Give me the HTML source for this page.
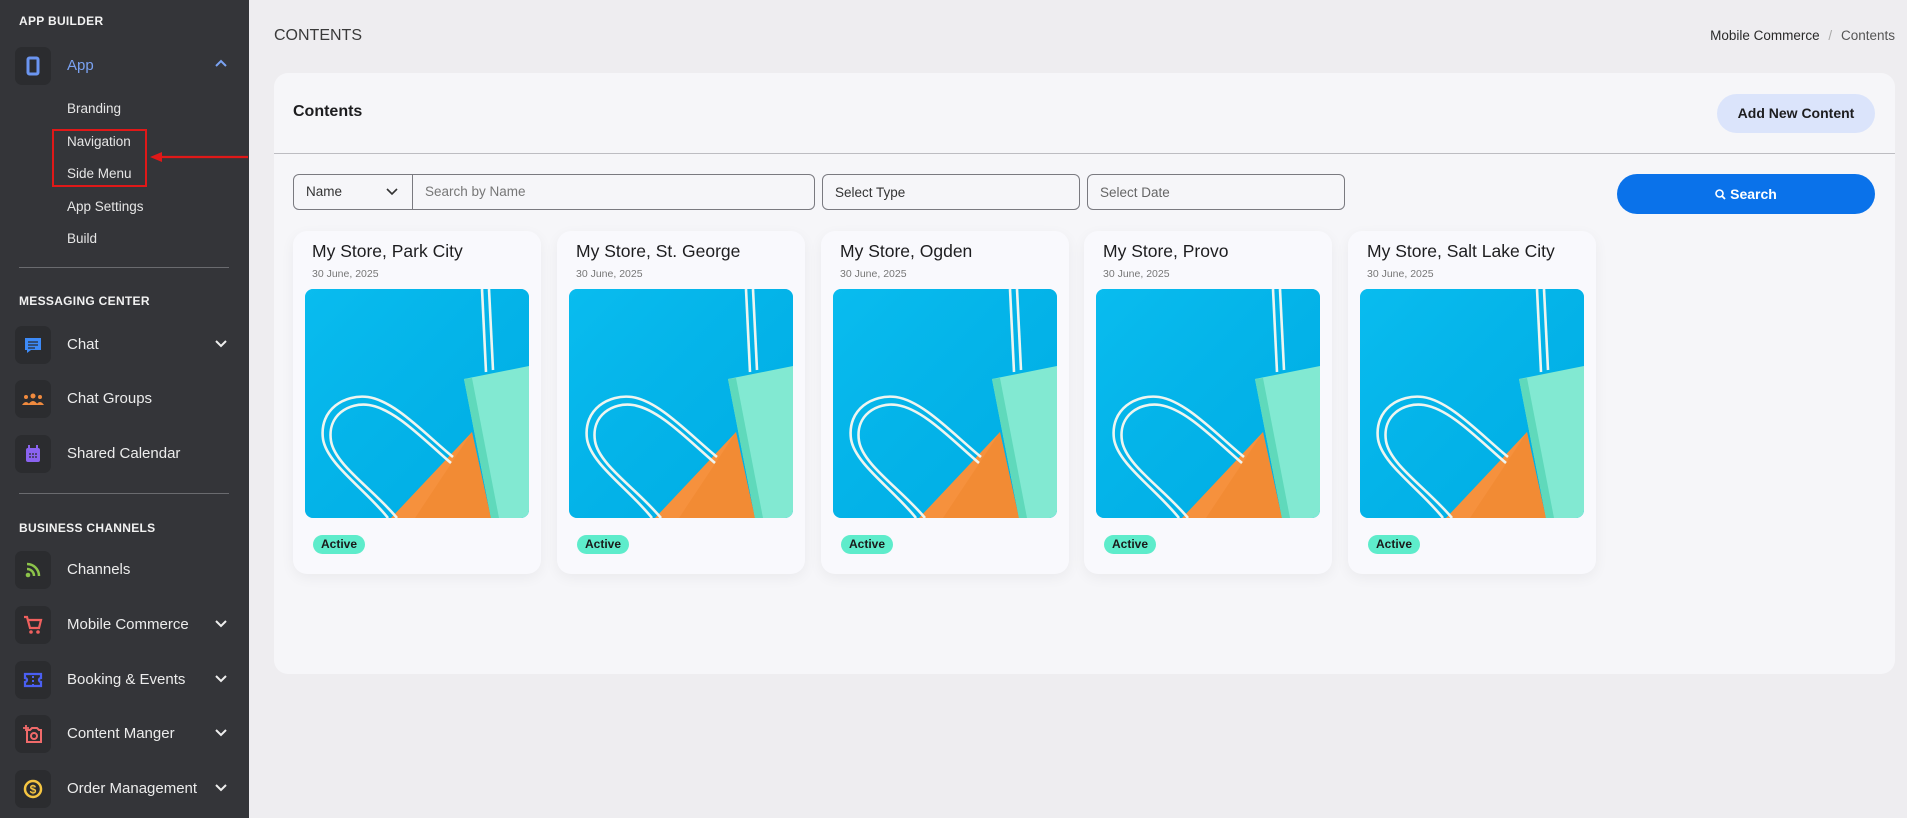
<!DOCTYPE html>
<html><head><meta charset="utf-8"><style>
*{box-sizing:border-box;margin:0;padding:0}
body{width:1907px;height:818px;overflow:hidden;background:#eeedf0;font-family:"Liberation Sans",sans-serif;position:relative}
.sb{position:absolute;left:0;top:0;width:249px;height:818px;background:#343539}
.sh{position:absolute;left:19px;font-size:12px;font-weight:bold;color:#f2f2f2;letter-spacing:.3px}
.row{position:absolute;left:15px;width:220px;height:38px}
.ib{position:absolute;left:0;top:0;width:36px;height:38px;background:#2b2c2f;border-radius:7px;display:flex;align-items:center;justify-content:center}
.rt{position:absolute;left:52px;top:10px;font-size:15px;color:#ececec;white-space:nowrap}
.chev{position:absolute;left:200px;top:12px}
.sub{position:absolute;left:67px;font-size:13.5px;color:#e6e6e6}
.div{position:absolute;left:19px;width:210px;height:1px;background:#6a6b6f}
.panel{position:absolute;left:274px;top:73px;width:1621px;height:601px;background:#f6f6f9;border-radius:14px}
.inp{position:absolute;top:174px;height:36px;border:1px solid #7a7a80;border-radius:6px;font-size:13.5px;color:#555;padding:10px 12px}
.card{position:absolute;top:231px;width:248px;height:343px;background:#f9f9fd;border-radius:14px;box-shadow:0 4px 14px rgba(0,0,0,.05)}
.card h3{position:absolute;left:19px;top:10px;font-size:17.5px;font-weight:normal;color:#1d1d1f;white-space:nowrap}
.card .d{position:absolute;left:19px;top:37px;font-size:10.5px;color:#777}
.card svg{position:absolute;left:12px;top:58px;border-radius:8px}
.card .a{position:absolute;left:20px;top:304px;height:19px;padding:0 8px;background:#5eeccb;border-radius:10px;font-size:12px;font-weight:bold;line-height:19px;color:#1a1a1a}
</style></head><body>
<svg width="0" height="0" style="position:absolute"><defs>
<symbol id="bag" viewBox="0 0 224 229">
<rect width="224" height="229" fill="#00b4ea"/>
<rect width="224" height="229" fill="url(#g1)"/>
<path d="M86 229 L167 143 L186 229Z" fill="#f6913d"/>
<path d="M110 229 L167 143 L186 229Z" fill="#f0872e" opacity=".6"/>
<path d="M159 90 L224 77 L224 229 L186 229Z" fill="#82e9d2"/>
<path d="M159 90 L167 89 L194 229 L186 229Z" fill="#5fd9bb"/>
<g fill="none" stroke="#eef5f0" stroke-width="2.6">
<path d="M177 0 L181 83"/><path d="M184 0 L188 81"/>
<path d="M83 229 C60 200 22 175 18 150 C14 120 40 105 63 108 C90 112 120 145 148 168"/>
<path d="M92 229 C68 200 30 176 26 152 C22 126 44 113 64 116 C90 120 118 150 146 174"/>
</g></symbol>
<linearGradient id="g1" x1="0" y1="0" x2="1" y2="1"><stop offset="0" stop-color="#12c4f4" stop-opacity=".5"/><stop offset="1" stop-color="#009fd8" stop-opacity=".3"/></linearGradient>
</defs></svg>

<div class="sb">
<div class="sh" style="top:14px">APP BUILDER</div>
<div class="row" style="top:47px"><div class="ib"><svg width="14" height="20"><rect x="2" y="2" width="10" height="16" rx="1.5" fill="none" stroke="#6b95f0" stroke-width="3"/></svg></div><div class="rt" style="color:#7aa2f2">App</div><svg class="chev" width="12" height="10"><path d="M1 7 L6 2 L11 7" fill="none" stroke="#7aa2f2" stroke-width="2"/></svg></div>
<div class="sub" style="top:101px">Branding</div>
<div class="sub" style="top:134px">Navigation</div>
<div class="sub" style="top:166px">Side Menu</div>
<div class="sub" style="top:199px">App Settings</div>
<div class="sub" style="top:231px">Build</div>
<div style="position:absolute;left:52px;top:129px;width:95px;height:58px;border:2px solid #e01818"></div>
<svg style="position:absolute;left:150px;top:151px" width="99" height="12"><path d="M10 6 L98 6" stroke="#e01818" stroke-width="2.2"/><path d="M0 6 L12 1 L12 11Z" fill="#e01818"/></svg>
<div class="div" style="top:267px"></div>
<div class="sh" style="top:294px">MESSAGING CENTER</div>
<div class="row" style="top:326px"><div class="ib"><svg width="20" height="20"><path d="M2 3 H18 V15 H8 L4 18 V15 H2Z" fill="#3d8af7"/><path d="M5 7H15M5 10H15M5 13H12" stroke="#2b2c2f" stroke-width="1.3"/></svg></div><div class="rt">Chat</div><svg class="chev" width="12" height="10"><path d="M1 3 L6 8 L11 3" fill="none" stroke="#eee" stroke-width="2"/></svg></div>
<div class="row" style="top:380px"><div class="ib"><svg width="22" height="14"><circle cx="11" cy="4" r="2.5" fill="#f08a3e"/><circle cx="4" cy="5" r="2" fill="#f08a3e"/><circle cx="18" cy="5" r="2" fill="#f08a3e"/><path d="M6 13 Q11 5 16 13Z M0 13 Q4 7 8 13Z M14 13 Q18 7 22 13Z" fill="#f08a3e"/></svg></div><div class="rt">Chat Groups</div></div>
<div class="row" style="top:435px"><div class="ib"><svg width="18" height="20"><rect x="2" y="4" width="14" height="14" rx="2" fill="#8a63f0"/><path d="M5 1V5M13 1V5" stroke="#8a63f0" stroke-width="2"/><path d="M5 10H13M5 13H13" stroke="#2b2c2f" stroke-width="1.3" stroke-dasharray="2 1"/></svg></div><div class="rt">Shared Calendar</div></div>
<div class="div" style="top:493px"></div>
<div class="sh" style="top:521px">BUSINESS CHANNELS</div>
<div class="row" style="top:551px"><div class="ib"><svg width="16" height="16"><circle cx="3" cy="13" r="2.3" fill="#8cc34a"/><path d="M2 7 A7 7 0 0 1 9 14 M2 2 A12 12 0 0 1 14 14" fill="none" stroke="#8cc34a" stroke-width="2.5"/></svg></div><div class="rt">Channels</div></div>
<div class="row" style="top:606px"><div class="ib"><svg width="20" height="20"><path d="M1 2H4L7 13H16L18 5H5" fill="none" stroke="#f0605e" stroke-width="2.2"/><circle cx="8" cy="17" r="1.8" fill="#f0605e"/><circle cx="15" cy="17" r="1.8" fill="#f0605e"/></svg></div><div class="rt">Mobile Commerce</div><svg class="chev" width="12" height="10"><path d="M1 3 L6 8 L11 3" fill="none" stroke="#eee" stroke-width="2"/></svg></div>
<div class="row" style="top:661px"><div class="ib"><svg width="20" height="16"><path d="M2 2H18V6A2 2 0 0 0 18 10V14H2V10A2 2 0 0 0 2 6Z" fill="none" stroke="#4a5ff2" stroke-width="2.2"/><path d="M10 4V6M10 8V10M10 12V13" stroke="#4a5ff2" stroke-width="2"/></svg></div><div class="rt">Booking &amp; Events</div><svg class="chev" width="12" height="10"><path d="M1 3 L6 8 L11 3" fill="none" stroke="#eee" stroke-width="2"/></svg></div>
<div class="row" style="top:715px"><div class="ib"><svg width="20" height="20"><path d="M4 6H7L9 4H14L16 6H18V18H4Z" fill="none" stroke="#f06a6a" stroke-width="2"/><circle cx="11" cy="12" r="3" fill="none" stroke="#f06a6a" stroke-width="2"/><path d="M3 1V7M0 4H6" stroke="#f06a6a" stroke-width="1.8"/></svg></div><div class="rt">Content Manger</div><svg class="chev" width="12" height="10"><path d="M1 3 L6 8 L11 3" fill="none" stroke="#eee" stroke-width="2"/></svg></div>
<div class="row" style="top:770px"><div class="ib"><svg width="20" height="20"><circle cx="10" cy="10" r="8" fill="none" stroke="#f5c542" stroke-width="2.5"/><text x="10" y="14.5" font-size="12" font-weight="bold" fill="#f5c542" text-anchor="middle" font-family="Liberation Sans">$</text></svg></div><div class="rt">Order Management</div><svg class="chev" width="12" height="10"><path d="M1 3 L6 8 L11 3" fill="none" stroke="#eee" stroke-width="2"/></svg></div>
</div>

<div style="position:absolute;left:274px;top:27px;font-size:16px;color:#3a3a3a;font-weight:500">CONTENTS</div>
<div style="position:absolute;right:12px;top:28px;font-size:13.5px;color:#2a2a2a">Mobile Commerce <span style="color:#aaa;margin:0 5px">/</span> <span style="color:#555">Contents</span></div>

<div class="panel"></div>
<div style="position:absolute;left:293px;top:103px;font-size:16px;font-weight:bold;color:#1d1d1f">Contents</div>
<div style="position:absolute;left:1717px;top:94px;width:158px;height:39px;background:#dbe4fb;border-radius:20px;font-size:14px;font-weight:bold;color:#1d1d1f;text-align:center;line-height:39px">Add New Content</div>
<div style="position:absolute;left:274px;top:153px;width:1621px;height:1px;background:#bdbdc2"></div>

<div class="inp" style="left:293px;width:522px"></div>
<div style="position:absolute;left:412px;top:175px;width:1px;height:34px;background:#7a7a80"></div>
<div style="position:absolute;left:306px;top:184px;font-size:13.5px;color:#333">Name</div>
<svg style="position:absolute;left:386px;top:187px" width="12" height="9"><path d="M1 2 L6 7 L11 2" fill="none" stroke="#333" stroke-width="1.6"/></svg>
<div style="position:absolute;left:425px;top:184px;font-size:13.5px;color:#777">Search by Name</div>
<div class="inp" style="left:822px;width:258px;color:#333">Select Type</div>
<div class="inp" style="left:1087px;width:258px;color:#666">Select Date</div>
<div style="position:absolute;left:1617px;top:174px;width:258px;height:40px;background:#0a72ea;border-radius:20px;color:#fff;font-size:14px;font-weight:bold;text-align:center;line-height:40px"><svg width="11" height="11" style="vertical-align:-1px;margin-right:4px"><circle cx="4.5" cy="4.5" r="3.5" fill="none" stroke="#fff" stroke-width="1.6"/><path d="M7 7L10 10" stroke="#fff" stroke-width="1.8"/></svg>Search</div>

<div class="card" style="left:293px"><h3>My Store, Park City</h3><div class="d">30 June, 2025</div><svg width="224" height="229"><use href="#bag"/></svg><div class="a">Active</div></div>
<div class="card" style="left:557px"><h3>My Store, St. George</h3><div class="d">30 June, 2025</div><svg width="224" height="229"><use href="#bag"/></svg><div class="a">Active</div></div>
<div class="card" style="left:821px"><h3>My Store, Ogden</h3><div class="d">30 June, 2025</div><svg width="224" height="229"><use href="#bag"/></svg><div class="a">Active</div></div>
<div class="card" style="left:1084px"><h3>My Store, Provo</h3><div class="d">30 June, 2025</div><svg width="224" height="229"><use href="#bag"/></svg><div class="a">Active</div></div>
<div class="card" style="left:1348px"><h3>My Store, Salt Lake City</h3><div class="d">30 June, 2025</div><svg width="224" height="229"><use href="#bag"/></svg><div class="a">Active</div></div>
</body></html>
